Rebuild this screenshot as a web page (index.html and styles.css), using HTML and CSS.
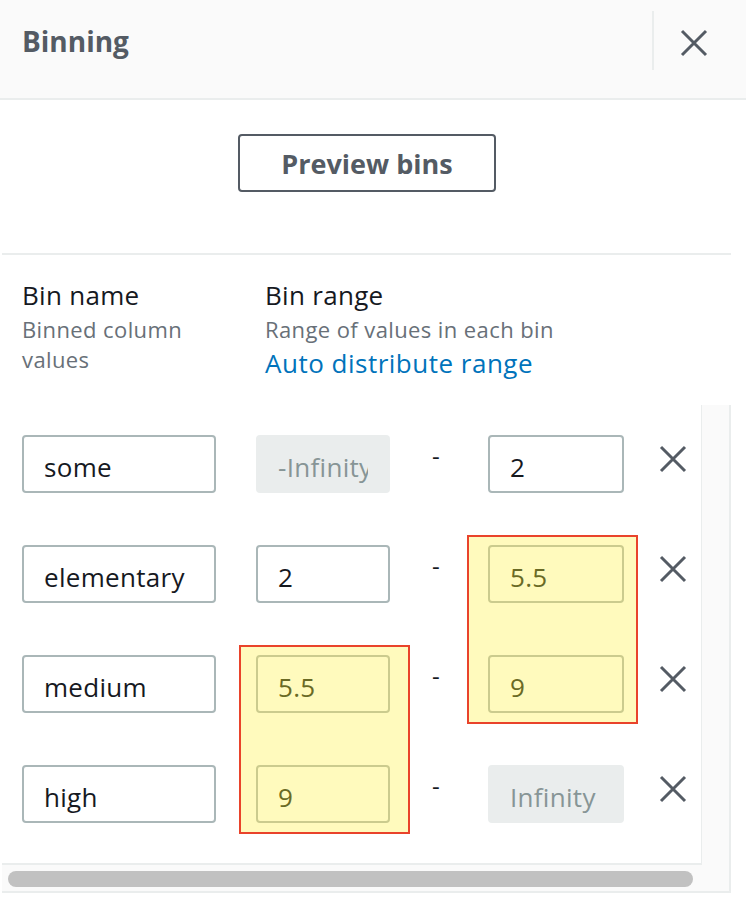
FILE: index.html
```html
<!DOCTYPE html>
<html lang="en">
<head>
<meta charset="utf-8">
<title>Binning</title>
<link rel="stylesheet" href="styles.css">
</head>
<body>
<div class="panel">
  <header class="header">
    <h1 class="title">Binning</h1>
    <div class="divider-v"></div>
    <button class="close" aria-label="Close">
      <svg width="28" height="28" viewBox="0 0 28 28"><path d="M2 2 L26 26 M26 2 L2 26" stroke="#545b64" stroke-width="3" fill="none"/></svg>
    </button>
  </header>

  <div class="actions">
    <button class="btn">Preview bins</button>
  </div>
  <div class="divider-h"></div>

  <div class="colheads">
    <div class="colhead name-head">
      <div class="label">Bin name</div>
      <div class="desc">Binned column values</div>
    </div>
    <div class="colhead">
      <div class="label">Bin range</div>
      <div class="desc">Range of values in each bin</div>
      <a class="link" href="#">Auto distribute range</a>
    </div>
  </div>

  <div class="scroller">
    <div class="content">
      <div class="highlight hl-left"></div>
      <div class="highlight hl-right"></div>
      <div class="rows">
        <div class="field">some</div>
        <div class="field disabled"><span class="clip">-Infinity</span></div>
        <div class="dash">-</div>
        <div class="field">2</div>
        <div class="remove"><svg width="28" height="28" viewBox="0 0 28 28"><path d="M2 2 L26 26 M26 2 L2 26" stroke="#545b64" stroke-width="3" fill="none"/></svg></div>

        <div class="field">elementary</div>
        <div class="field">2</div>
        <div class="dash">-</div>
        <div class="field warn">5.5</div>
        <div class="remove"><svg width="28" height="28" viewBox="0 0 28 28"><path d="M2 2 L26 26 M26 2 L2 26" stroke="#545b64" stroke-width="3" fill="none"/></svg></div>

        <div class="field">medium</div>
        <div class="field warn">5.5</div>
        <div class="dash">-</div>
        <div class="field warn">9</div>
        <div class="remove"><svg width="28" height="28" viewBox="0 0 28 28"><path d="M2 2 L26 26 M26 2 L2 26" stroke="#545b64" stroke-width="3" fill="none"/></svg></div>

        <div class="field">high</div>
        <div class="field warn">9</div>
        <div class="dash">-</div>
        <div class="field disabled">Infinity</div>
        <div class="remove"><svg width="28" height="28" viewBox="0 0 28 28"><path d="M2 2 L26 26 M26 2 L2 26" stroke="#545b64" stroke-width="3" fill="none"/></svg></div>
      </div>
    </div>
    <div class="vtrack"></div>
    <div class="htrack"><div class="thumb"></div></div>
  </div>
</div>
</body>
</html>
```
FILE: styles.css
```css
* { box-sizing: border-box; }
html, body { margin: 0; padding: 0; background: #fff; }
body {
  width: 746px;
  height: 912px;
  overflow: hidden;
  font-family: "Open Sans", "Noto Sans", sans-serif;
  color: #16191f;
}

.header {
  height: 100px;
  background: #fafafa;
  border-bottom: 2px solid #eaeded;
  display: flex;
  align-items: flex-start;
}
.title {
  margin: 0;
  padding: 23px 0 0 22px;
  font-size: 28px;
  line-height: 36px;
  font-weight: 700;
  color: #545b64;
}
.divider-v {
  margin-left: auto;
  margin-top: 11px;
  width: 2px;
  height: 59px;
  background: #eaeded;
}
.close {
  width: 92px;
  margin: 0;
  padding: 29px 0 0 26px;
  border: 0;
  background: transparent;
  display: flex;
  justify-content: flex-start;
}
.close svg { width: 28px; height: 28px; }

.actions {
  padding: 34px 0 0 238px;
  height: 153px;
}
.btn {
  width: 258px;
  height: 58px;
  border: 2px solid #545b64;
  border-radius: 4px;
  background: #fff;
  color: #545b64;
  font-family: "Open Sans", "Noto Sans", sans-serif;
  font-size: 27px;
  font-weight: 700;
  padding: 0;
}
.divider-h {
  margin-left: 2px;
  width: 729px;
  height: 2px;
  background: #eaeded;
}

.colheads {
  display: grid;
  grid-template-columns: 200px 1fr;
  column-gap: 43px;
  padding: 24px 0 0 22px;
  height: 150px;
}
.label {
  font-size: 26px;
  line-height: 32px;
  letter-spacing: 0.3px;
  color: #16191f;
}
.desc {
  margin-top: 3px;
  font-size: 22px;
  line-height: 30px;
  letter-spacing: 0.4px;
  color: #687078;
}
.link {
  display: block;
  margin-top: 3px;
  font-size: 26px;
  line-height: 32px;
  letter-spacing: 0.5px;
  color: #0073bb;
  text-decoration: none;
}

.scroller {
  margin-left: 2px;
  width: 729px;
  display: grid;
  grid-template-columns: 700px 29px;
  grid-template-rows: 460px 28px;
  background: #fafafa;
}
.content {
  position: relative;
  background: #fff;
  border-right: 1px solid #eaeded;
  border-bottom: 2px solid #eaeded;
  padding: 30px 0 0 20px;
}
.vtrack {
  border-right: 2px solid #eaeded;
}
.htrack {
  grid-column: 1 / 3;
  border-right: 2px solid #eaeded;
  border-bottom: 2px solid #eaeded;
  padding: 6px 0 0 6px;
}
.thumb {
  width: 685px;
  height: 16px;
  border-radius: 8px;
  background: #c1c1c1;
}

.rows {
  position: relative;
  z-index: 1;
  display: grid;
  grid-template-columns: 194px 174px 98px 136px 64px;
  grid-auto-rows: 58px;
  row-gap: 52px;
}
.rows > .field:nth-child(5n+2) { margin-left: 40px; width: 134px; }

.field {
  height: 58px;
  border: 2px solid #aab7b8;
  border-radius: 4px;
  background: #fff;
  padding: 0 0 0 20px;
  font-size: 26px;
  line-height: 60px;
  letter-spacing: 0.3px;
  color: #16191f;
  white-space: nowrap;
  overflow: hidden;
}
.field.disabled {
  background: #eaeded;
  border-color: #eaeded;
  color: #879596;
}
.clip {
  display: block;
  width: 90px;
  overflow: hidden;
  white-space: nowrap;
}
.field.warn {
  background: #fffabd;
  border-color: #cbcb8e;
  color: #6a6a25;
}
.dash {
  font-size: 24px;
  line-height: 30px;
  padding: 6px 0 0 42px;
  color: #16191f;
}
.remove {
  padding: 10px 0 0 35px;
}
.remove svg { width: 28px; height: 28px; display: block; }

.highlight {
  position: absolute;
  z-index: 0;
  width: 171px;
  height: 189px;
  border: 2px solid #e9432b;
  background: #fffabd;
}
.hl-left { left: 237px; top: 240px; }
.hl-right { left: 465px; top: 130px; }
```
